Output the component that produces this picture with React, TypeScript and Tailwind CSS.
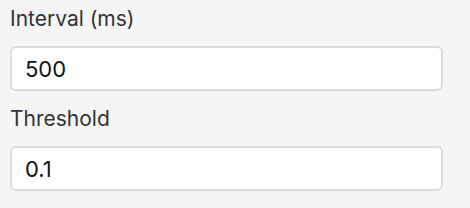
import React, { useState } from 'react';

interface FieldProps {
  label: string;
  value: string;
  onChange: (v: string) => void;
}

const Field: React.FC<FieldProps> = ({ label, value, onChange }) => (
  <label className="block">
    <span className="block text-[21px] leading-6 text-[#333333] mb-[15px]">{label}</span>
    <input
      type="text"
      value={value}
      onChange={e => onChange(e.target.value)}
      className="block w-[433px] h-[45px] rounded-[6px] border-2 border-[#dcdcdc] bg-white px-[13px] text-[22px] text-[#111111] outline-none"
    />
  </label>
);

const App: React.FC = () => {
  const [interval, setInterval] = useState('500');
  const [threshold, setThreshold] = useState('0.1');

  return (
    <div className="w-[470px] h-[208px] bg-[#f5f5f5] pl-[10px] pt-[7px] flex flex-col gap-[16px] font-['Inter','Liberation_Sans',sans-serif]">
      <Field label="Interval (ms)" value={interval} onChange={setInterval} />
      <Field label="Threshold" value={threshold} onChange={setThreshold} />
    </div>
  );
};

export default App;
